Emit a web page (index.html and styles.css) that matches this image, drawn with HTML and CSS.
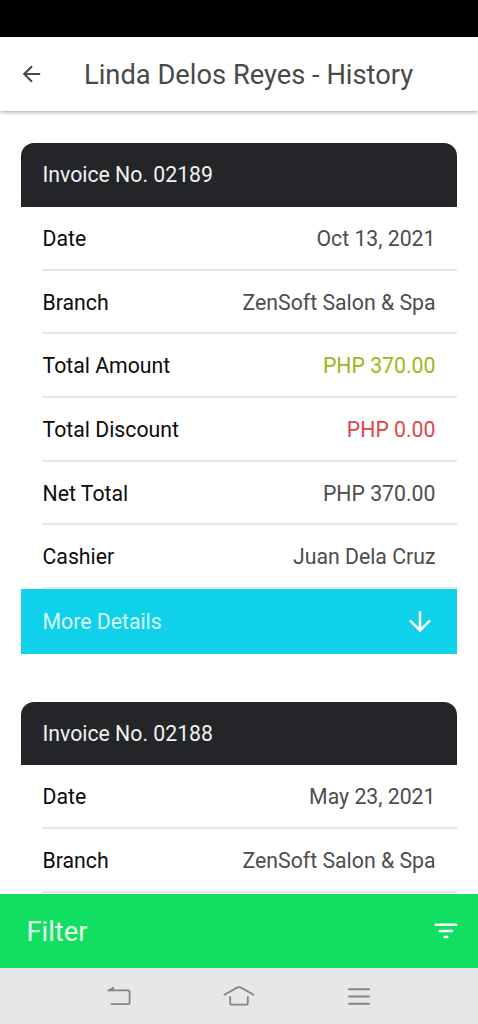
FILE: index.html
```html
<!DOCTYPE html>
<html lang="en">
<head>
<meta charset="utf-8">
<title>Linda Delos Reyes - History</title>
<link rel="stylesheet" href="styles.css">
</head>
<body>
<div class="app">
  <div class="status-bar"></div>
  <header class="toolbar">
    <svg class="back-icon" viewBox="0 0 18 18" fill="none" stroke="#494949" stroke-width="2.1"><path d="M17.2 9H1.2M9 1.2 1.2 9l7.8 7.8"/></svg>
    <h1 class="title">Linda Delos Reyes - History</h1>
  </header>
  <main class="content">
    <section class="card">
      <h2 class="card-header">Invoice No. 02189</h2>
      <dl class="rows">
        <div class="row"><dt>Date</dt><dd>Oct 13, 2021</dd></div>
        <div class="row"><dt>Branch</dt><dd>ZenSoft Salon &amp; Spa</dd></div>
        <div class="row"><dt>Total Amount</dt><dd class="amount">PHP 370.00</dd></div>
        <div class="row"><dt>Total Discount</dt><dd class="discount">PHP 0.00</dd></div>
        <div class="row"><dt>Net Total</dt><dd>PHP 370.00</dd></div>
        <div class="row"><dt>Cashier</dt><dd>Juan Dela Cruz</dd></div>
      </dl>
      <div class="more">
        <span>More Details</span>
        <svg class="down-icon" viewBox="0 0 22 22" fill="none" stroke="#fff" stroke-width="2.5" stroke-linecap="round"><path d="M11 .3V19.4" stroke-linecap="butt"/><path d="m1.7 10.2 9.3 9.2 9.3-9.2"/></svg>
      </div>
    </section>
    <section class="card">
      <h2 class="card-header">Invoice No. 02188</h2>
      <dl class="rows">
        <div class="row"><dt>Date</dt><dd>May 23, 2021</dd></div>
        <div class="row"><dt>Branch</dt><dd>ZenSoft Salon &amp; Spa</dd></div>
      </dl>
    </section>
  </main>
  <footer class="filter">
    <span>Filter</span>
    <svg class="filter-icon" viewBox="0 0 24 16" fill="none" stroke="#fff" stroke-width="2.6" stroke-linecap="round"><path d="M1.8 1.8h20.4M6 8h12M10.8 14h2.4"/></svg>
  </footer>
  <nav class="nav-bar">
    <svg class="nav-icon" viewBox="0 0 34 24" fill="none" stroke="#858585" stroke-width="1.8" stroke-linecap="round" stroke-linejoin="round"><path d="M6.5 6.4H26q1.6 0 1.6 1.6v10.5q0 1.6-1.6 1.6H9.5"/><path d="M6 6.4 11.5 3v3.4z" fill="#858585" stroke-width=".8"/></svg>
    <svg class="nav-icon" viewBox="0 0 34 24" fill="none" stroke="#858585" stroke-width="1.8" stroke-linecap="round" stroke-linejoin="round"><path d="M2.4 10.8 15 3.6q2-1 4 0l12.6 7.2"/><path d="M8.2 13v5.9q0 1.8 1.8 1.8h14q1.8 0 1.8-1.8V13"/></svg>
    <svg class="nav-icon" viewBox="0 0 34 24" fill="none" stroke="#858585" stroke-width="1.9" stroke-linecap="round"><path d="M7 5.2h20M7 12.5h20M7 19.7h20"/></svg>
  </nav>
</div>
</body>
</html>
```
FILE: styles.css
```css
* { box-sizing: border-box; margin: 0; padding: 0; }

body {
  background: #fff;
  font-family: Roboto, "Liberation Sans", sans-serif;
  color: #4d4d4d;
}

.app {
  display: flex;
  flex-direction: column;
  width: 478px;
  height: 1024px;
  overflow: hidden;
}

.status-bar { flex: none; height: 37px; background: #000; }

.toolbar {
  flex: none;
  display: flex;
  align-items: center;
  height: 74px;
  padding-left: 23px;
  background: #fff;
  box-shadow: 0 1px 4px rgba(0, 0, 0, .38);
}

.back-icon { width: 18px; height: 18px; }

.title {
  margin-left: 43px;
  padding-top: 2px;
  font-size: 27.3px;
  font-weight: 400;
  line-height: 72px;
  white-space: nowrap;
  color: #494949;
}

.content {
  flex: 1;
  min-height: 0;
  overflow: hidden;
  padding: 32.3px 21px 0;
  font-size: 21.25px;
}

.card { margin-bottom: 47.5px; }

.card-header {
  height: 63.7px;
  padding-left: 21.5px;
  border-radius: 13px 13px 0 0;
  background: #232529;
  color: #f2f2f2;
  font-size: inherit;
  font-weight: 400;
  line-height: 64.6px;
}

.rows { padding-left: 21px; }

.row {
  display: flex;
  justify-content: space-between;
  height: 63.7px;
  padding: 0 21.5px 0 .5px;
  border-bottom: 2px solid #e5e5e5;
  line-height: 63.4px;
}

.row dt { color: #0c0c0c; }
.row .amount { color: #98b919; }
.row .discount { color: #e0464b; }

.more {
  display: flex;
  justify-content: space-between;
  align-items: center;
  height: 65px;
  padding: 0 26.5px 0 21.5px;
  background: #10d1ea;
  color: #d8fbff;
}

.down-icon { width: 22px; height: 22px; }

.filter {
  flex: none;
  display: flex;
  justify-content: space-between;
  align-items: center;
  height: 74px;
  padding: 0 20px 0 26.5px;
  background: #12df61;
  color: #e2ffea;
  font-size: 27.3px;
  line-height: 32px;
}

.filter span { padding-top: 1px; }

.filter-icon { width: 24px; height: 16px; }

.nav-bar {
  flex: none;
  display: flex;
  justify-content: center;
  gap: 86px;
  height: 56px;
  padding-top: 16px;
  background: #e7e7e7;
}

.nav-icon { width: 34px; height: 24px; }
```
